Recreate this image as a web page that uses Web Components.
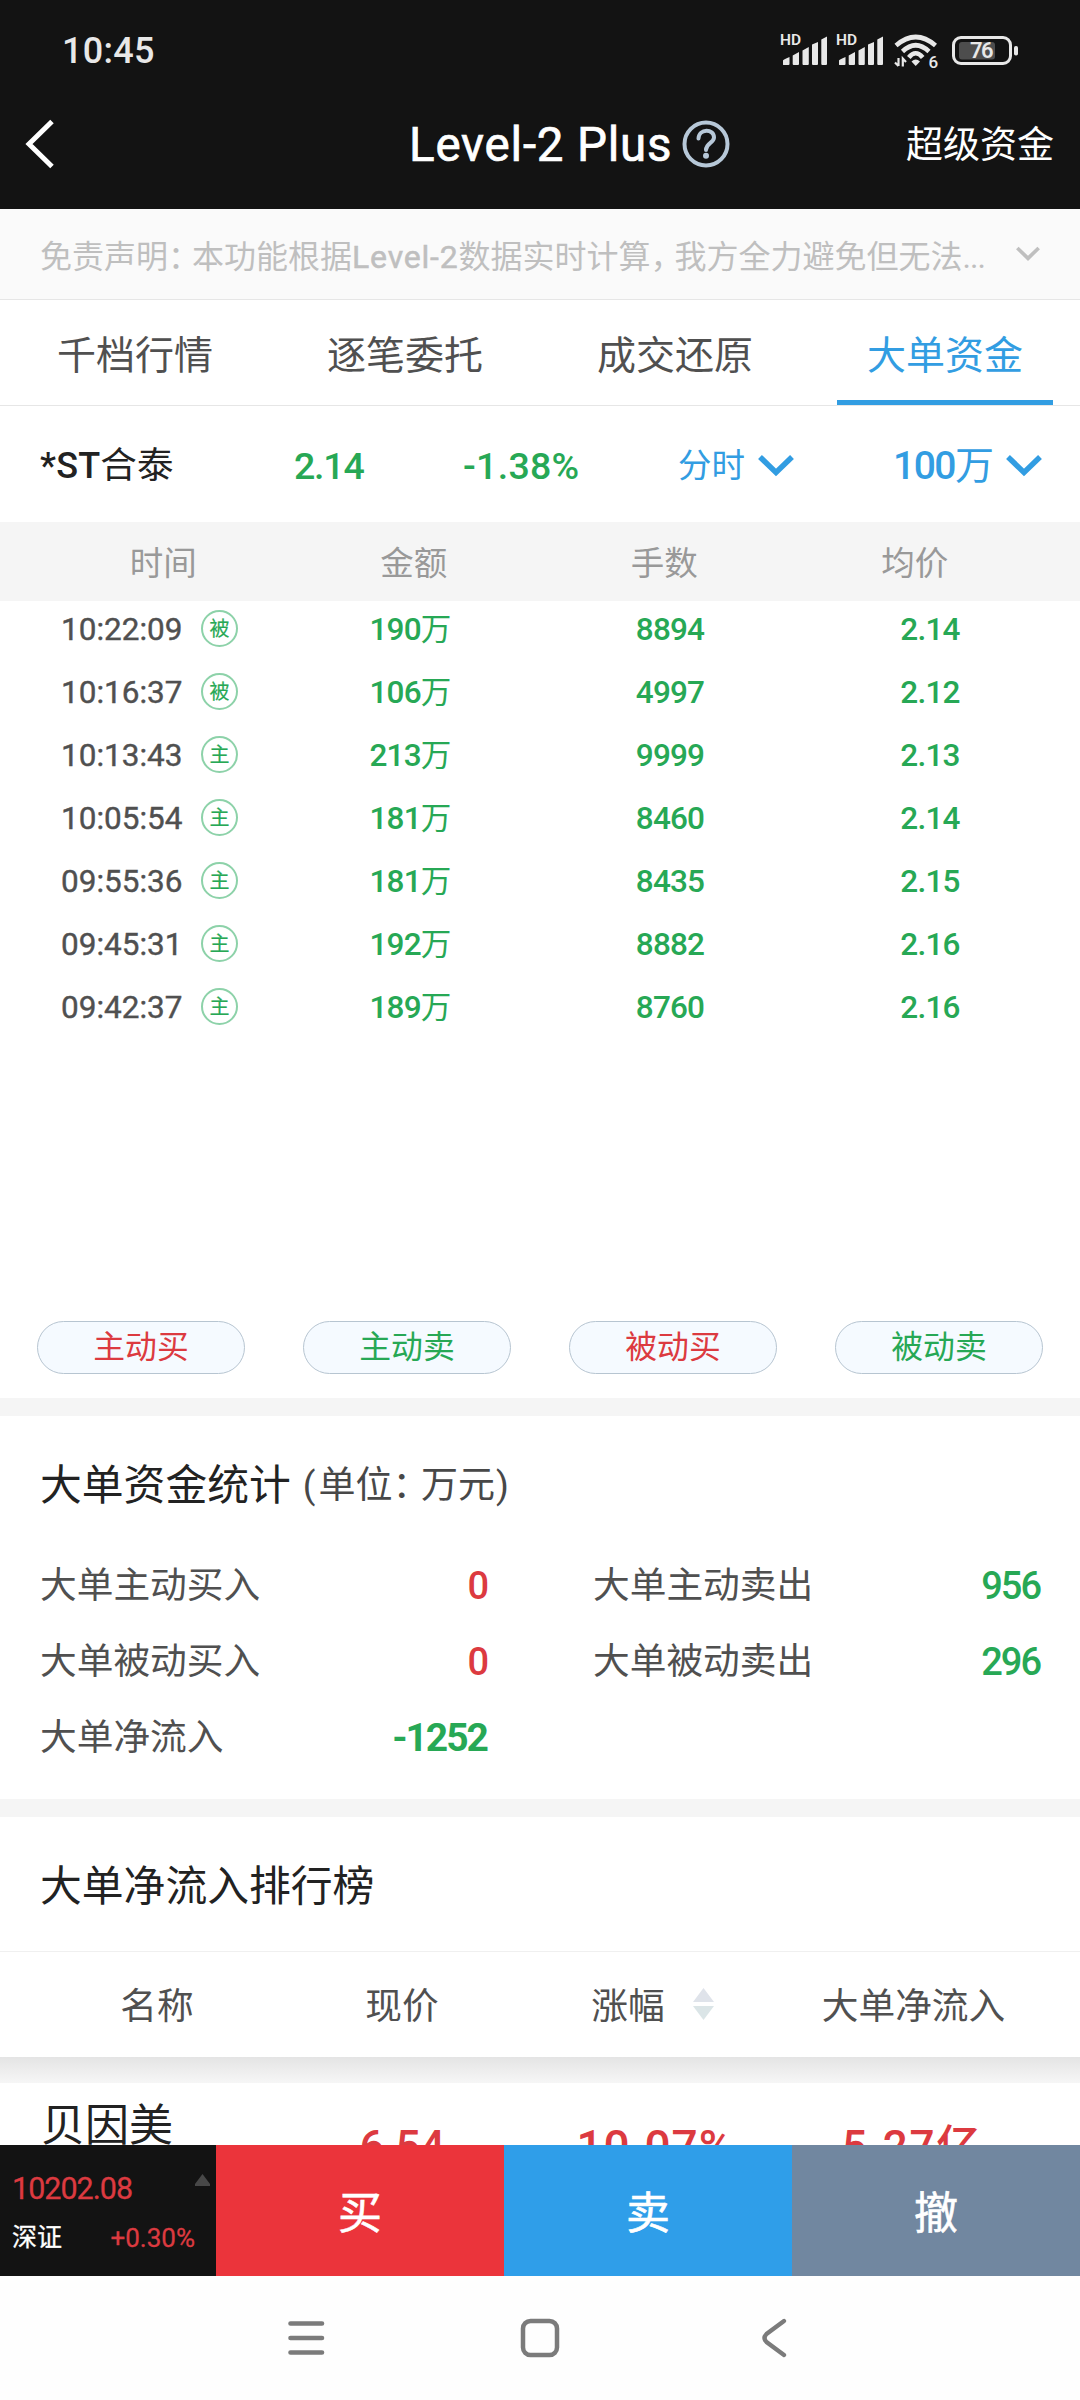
<!DOCTYPE html>
<html lang="zh-CN">
<head>
<meta charset="utf-8">
<title>Level-2 Plus</title>
<style>
  html, body { margin: 0; padding: 0; background: #fff; }
</style>
</head>
<body>
<l2-app></l2-app>
<script>
const RED = '#dc3a40'
const GREEN = '#27a855'
const BLUE = '#329de2'

// attach an open shadow root and fill it
function shadow(el, css, html) {
  el.attachShadow({ mode: 'open' }).innerHTML = `<style>*{box-sizing:border-box}${css}</style>${html}`
}

customElements.define('status-bar', class extends HTMLElement {
  constructor() {
    super()
    let signal = `<div class="sig"><span>HD</span><svg width="46" height="29" viewBox="0 0 46 29" fill="#e8e8e8">
      <path d="M2 28.5V24.5Q2 23.5 8.5 21V28Q8.5 29 7.5 29H3Q2 29 2 28.5ZM11.7 19.5L18 16V28Q18 29 17 29H12.7Q11.7 29 11.7 28ZM21.5 14.5L27.8 11V28Q27.8 29 26.8 29H22.5Q21.5 29 21.5 28ZM31 8.5L37 6V28Q37 29 36 29H32Q31 29 31 28ZM40.3 3.5L46 .5V28Q46 29 45 29H41.3Q40.3 29 40.3 28Z"/></svg></div>`
    shadow(this, `
    :host{display:flex;align-items:center;height:80px;color:#e8e8e8;padding:0 61px 0 62px}
    .time{font:500 36px/40px Roboto,sans-serif;letter-spacing:.3px;padding-top:21px;flex:1}
    .sig{display:flex;position:relative;width:56px;height:29px;margin-top:20px}
    .sig span{position:absolute;left:-1px;top:-3px;font:600 15.5px/15px Roboto,sans-serif}
    .wifi{margin:22px 11px 0 1px}
    .batt{position:relative;width:67px;height:29px;margin-top:20px}
    .batt svg{display:block}
    .batt span{position:absolute;left:18px;top:4px;font:600 22px/22px Roboto,sans-serif;letter-spacing:-1.5px}
    .six{font:500 17px Roboto,sans-serif;fill:#e8e8e8}
    `, `<div class="time">10:45</div>${signal}${signal}
    <svg class="wifi" width="47" height="39" viewBox="0 -2 47 39" fill="none" stroke="#e8e8e8" stroke-width="4.6">
      <path d="M2 11.500Q21.700-5.500 41.500 11.500M8.500 17.500Q21.700 5 35 17.500M14.800 23.500Q21.700 15 28.700 23.500"/>
      <path d="M17.500 27.500Q21.700 23.500 26 27.500L21.700 32Z" fill="#e8e8e8" stroke="none"/>
      <path d="M4.500 24V32M1 28.500L4.500 32M8.800 32.500V24.500L12 28" stroke-width="2.2"/>
      <text class="six" x="34.5" y="33.500" stroke="none">6</text>
    </svg>
    <div class="batt"><svg width="67" height="29" viewBox="0 0 67 29">
      <rect x="1.5" y="1.5" width="57" height="26" rx="7.5" fill="none" stroke="#e8e8e8" stroke-width="3"/>
      <rect x="7" y="6" width="36" height="17.5" rx="3" fill="#4d4d4d"/>
      <rect x="62" y="10" width="4" height="9.5" rx="1.8" fill="#e8e8e8"/>
    </svg><span>76</span></div>`)
  }
})

customElements.define('title-bar', class extends HTMLElement {
  constructor() {
    super()
    shadow(this, `
    :host{display:grid;grid-template-columns:385px auto 1fr;align-items:center;height:129px;color:#fff;padding:0 26px 0 24px}
    h1{display:flex;align-items:center;gap:10px;margin:0;font-size:47.5px;line-height:56px;font-weight:400;letter-spacing:.8px;-webkit-text-stroke:.7px #fff}
    .right{text-align:right;font-size:37px;line-height:44px;padding-top:2px}
    svg{display:block}
    h1 svg{margin-top:-2px}
    `, `<svg width="32" height="52" viewBox="0 0 32 52" fill="none" stroke="#fff" stroke-width="5"><path d="M28 2.5L5 25L28 47.5"/></svg>
    <h1><slot></slot><svg width="48" height="48" viewBox="0 0 48 48" fill="none" stroke="#b7c8d8" stroke-width="4">
      <circle cx="24" cy="24" r="21.5"/><path d="M16.500 18.500C17 8 32 8.500 32 17.500C32 23 24 23 24 30" stroke-linecap="round"/><circle cx="24" cy="35.7" r="3" fill="#b7c8d8" stroke="none"/></svg></h1>
    <div class="right"><slot name="right"></slot></div>`)
  }
})

customElements.define('drop-arrow', class extends HTMLElement {
  constructor() {
    super()
    shadow(this, `:host{display:block;width:38px;height:24px}svg{display:block;width:100%;height:100%}`,
      `<svg viewBox="0 0 38 24" fill="none" stroke="currentColor" stroke-width="5.5"><path d="M3 3L19 18.500L35 3"/></svg>`)
  }
})

customElements.define('notice-line', class extends HTMLElement {
  constructor() {
    super()
    shadow(this, `
    :host{display:flex;align-items:center;height:91px;background:#fafafa;border-bottom:1px solid #e6e6e6;color:#bfbfbf;padding:0 39px 0 40px;font-size:32px}
    div{flex:1;white-space:nowrap}
    i{font-style:normal;font-feature-settings:"halt";margin-right:8px}
    b{font-weight:400;letter-spacing:.8px;-webkit-text-stroke:.5px #bfbfbf}
    drop-arrow{width:26px;height:16px}
    `, `<div>免责声明<i>：</i>本功能根据<b>Level-2</b>数据实时计算<i>，</i>我方全力避免但无法<span style="letter-spacing:-1px">...</span></div><drop-arrow></drop-arrow>`)
  }
})

customElements.define('tab-strip', class extends HTMLElement {
  constructor() {
    super()
    let tabs = ['千档行情', '逐笔委托', '成交还原', '大单资金']
    shadow(this, `
    :host{display:grid;grid-template-columns:repeat(4,1fr);height:106px;border-bottom:1px solid #e6e6e6;color:#505050;font-size:39px}
    div{display:grid;grid-template-rows:100px 5px;justify-items:center;align-items:center}
    span{padding-top:3px}
    .on{color:${BLUE}}
    .on::after{content:'';width:216px;height:5px;background:${BLUE}}
    `, tabs.map((t, i) => `<div class="${i == 3 ? 'on' : ''}"><span>${t}</span></div>`).join(''))
  }
})

customElements.define('quote-line', class extends HTMLElement {
  constructor() {
    super()
    shadow(this, `
    :host{display:grid;grid-template-columns:254px 168px 216px 215px 1fr;align-items:center;height:116px;padding:3px 39px 0 40px;font-size:37.5px;font-weight:500;color:${GREEN};line-height:50px}
    .name{color:#222;font-size:36px;letter-spacing:.2px}
    .name em,.pick em{font-style:normal;font-weight:400}
    .name em{font-size:36.5px}
    .pick{display:flex;align-items:center;color:${BLUE};white-space:nowrap}
    .pick drop-arrow{margin:0 0 0 12px}
    .num{letter-spacing:-1.2px}
    .pct{letter-spacing:.3px;padding-left:1px}
    .p2{font-size:39px;letter-spacing:-1.5px}
    .p1{font-size:33.5px}
    `, `<div class="name">*ST<em>合泰</em></div><div class="num">2.14</div><div class="pct">-1.38%</div>
    <div class="pick p1"><em>分时</em><drop-arrow></drop-arrow></div>
    <div class="pick p2">100<em>万</em><drop-arrow></drop-arrow></div>`)
  }
})

customElements.define('deal-table', class extends HTMLElement {
  constructor() {
    super()
    let rows = [
      ['10:22:09', '被', '190', '8894', '2.14'],
      ['10:16:37', '被', '106', '4997', '2.12'],
      ['10:13:43', '主', '213', '9999', '2.13'],
      ['10:05:54', '主', '181', '8460', '2.14'],
      ['09:55:36', '主', '181', '8435', '2.15'],
      ['09:45:31', '主', '192', '8882', '2.16'],
      ['09:42:37', '主', '189', '8760', '2.16'],
    ]
    shadow(this, `
    :host{display:block;height:799px}
    .head{display:grid;grid-template-columns:repeat(4,250.5px);padding:0 0 3px 38px;height:79px;align-items:center;text-align:center;background:#f5f5f5;color:#999;font-size:33.5px}
    .row{display:grid;grid-template-columns:217px 260px 260px 260px;padding-left:63px;height:63px;align-items:center;text-align:center;color:${GREEN};font-size:31.5px;font-weight:500;line-height:40px;letter-spacing:-.8px}
    .body{margin-top:-3px}
    .t{display:flex;align-items:center;color:#505050;font-weight:400;letter-spacing:0;-webkit-text-stroke:.4px #505050}
    .t span{width:140px;margin-left:-2px;text-align:left}
    .t i{width:37px;height:37px;border:2px solid #8dd2a9;border-radius:50%;font:400 20px/31px "Noto Sans CJK SC",sans-serif;color:${GREEN};text-align:center;-webkit-text-stroke:.2px ${GREEN};margin-top:-2px}
    em{font-style:normal;font-weight:400;font-size:30.5px}
    `, `<div class="head"><div>时间</div><div>金额</div><div>手数</div><div>均价</div></div>
    <div class="body">` + rows.map(r => `<div class="row"><div class="t"><span>${r[0]}</span><i>${r[1]}</i></div>
      <div>${r[2]}<em>万</em></div><div>${r[3]}</div><div>${r[4]}</div></div>`).join('') + '</div>')
  }
})

customElements.define('filter-pills', class extends HTMLElement {
  constructor() {
    super()
    let pills = [['主动买', RED], ['主动卖', GREEN], ['被动买', RED], ['被动卖', GREEN]]
    shadow(this, `
    :host{display:flex;gap:58px;height:77px;padding:0 37px;font-size:31.8px}
    div{flex:1;height:53px;line-height:51px;text-align:center;border:1px solid #b7c5d1;border-radius:27px;background:#f5faff}
    `, pills.map(p => `<div style="color:${p[1]}">${p[0]}</div>`).join(''))
  }
})

customElements.define('fund-stats', class extends HTMLElement {
  constructor() {
    super()
    shadow(this, `
    :host{display:block;height:401px;border-top:18px solid #f5f5f5;color:#505050}
    h2{margin:0;padding:42px 0 0 40px;height:132px;font-size:41.8px;line-height:56px;font-weight:400;color:#222;display:flex}
    h2 small{font-size:37px;color:#484848;margin-left:12px}
    h2 i{font-style:normal;font-feature-settings:"halt";margin-right:10px}
    .o{margin-right:3px}
    .c{margin-left:1px}
    .grid{display:grid;grid-template-columns:447px 447px;column-gap:106px;grid-auto-rows:76px;padding-left:40px}
    .grid div{display:flex;justify-content:space-between;align-items:center;font-size:36.7px;line-height:50px}
    b{font-size:38px;font-weight:500;letter-spacing:-2px}
    .r{color:${RED}} .g{color:${GREEN}}
    .s{font-weight:700;font-size:39px;letter-spacing:-2px}
    `, `<h2>大单资金统计<small><span class="o">(</span>单位<i>：</i>万元<span class="c">)</span></small></h2>
    <div class="grid">
      <div>大单主动买入<b class="r">0</b></div><div>大单主动卖出<b class="g">956</b></div>
      <div>大单被动买入<b class="r">0</b></div><div>大单被动卖出<b class="g">296</b></div>
      <div>大单净流入<b class="g s">-1252</b></div>
    </div>`)
  }
})

customElements.define('rank-list', class extends HTMLElement {
  constructor() {
    super()
    shadow(this, `
    :host{display:block;height:346px;border-top:18px solid #f5f5f5;overflow:hidden}
    h2{margin:0;height:134px;padding:0 0 0 40px;line-height:139px;font-size:41.8px;font-weight:400;color:#222}
    .head,.row{display:grid;grid-template-columns:314px 176px 258px 332px;justify-items:center}
    .head{height:106px;border-top:1px solid #f0f0f0;align-items:center;font-size:36.7px;color:#505050;padding-bottom:3px}
    .sort{display:flex;align-items:center;gap:28px;padding-left:67px}
    .sort svg{margin-top:2px}
    .head div:last-child{margin-right:1px}
    .shade{height:26px;background:linear-gradient(#e4e4e4,#f6f6f6)}
    .row{height:62px;color:${RED};font-size:44px;font-weight:500;line-height:60px}
    .row div{padding-top:34px;letter-spacing:-.5px}
    .row .name{justify-self:start;padding:13px 0 0 41px;color:#222;font-size:44px;font-weight:400;letter-spacing:0}
    .row .pct{padding-left:72px;font-size:46px;letter-spacing:1px}
    .row .amt{letter-spacing:1.8px;padding-right:4px}
    `, `<h2>大单净流入排行榜</h2>
    <div class="head"><div>名称</div><div>现价</div><div class="sort">涨幅<svg width="21" height="34" viewBox="0 0 21 34"><path d="M0 15L10.500 1L21 15Z" fill="#dfe3ea"/><path d="M0 19L21 19L10.500 33Z" fill="#dbe5e7"/></svg></div><div>大单净流入</div></div>
    <div class="shade"></div>
    <div class="row"><div class="name">贝因美</div><div>6.54</div><div class="pct">10.07%</div><div class="amt">5.27亿</div></div>`)
  }
})

customElements.define('trade-bar', class extends HTMLElement {
  constructor() {
    super()
    shadow(this, `
    :host{display:grid;grid-template-columns:216px repeat(3,288px);height:131px;color:#fff}
    .act{display:flex;align-items:center;justify-content:center;font-size:44px;padding-bottom:2px;font-weight:400;-webkit-text-stroke:.6px #fff}
    .idx{background:#131313;padding:26px 0 0 12px;color:${RED}}
    .top{display:flex;justify-content:space-between;font-size:30.5px;line-height:36px;letter-spacing:-1px;padding-right:6px;-webkit-text-stroke:.3px}
    .bot{display:flex;align-items:center;justify-content:space-between;font-size:26px;line-height:34px;margin-top:14px;padding-right:21px;-webkit-text-stroke:.3px}
    .bot span{color:#fff;font-size:25px;font-weight:400}
    svg{margin-top:3px}
    `, `<div class="idx"><div class="top">10202.08<svg width="15" height="12" viewBox="0 0 15 12"><path d="M7.500 0L15 10V12H0V10Z" fill="#484848"/></svg></div>
    <div class="bot"><span>深证</span>+0.30%</div></div>
    <div class="act" style="background:#eb343b">买</div><div class="act" style="background:#2f9ee9">卖</div><div class="act" style="background:#7187a0">撤</div>`)
  }
})

customElements.define('nav-keys', class extends HTMLElement {
  constructor() {
    super()
    shadow(this, `
    :host{display:flex;justify-content:center;align-items:center;gap:194px;height:124px;background:#fefefe}
    svg{display:block}
    `, `<svg width="40" height="40" viewBox="0 0 40 40" fill="none" stroke="#7b7b7b" stroke-width="4.6" stroke-linecap="round"><path d="M4.500 5.500H36M4.500 20H36M4.500 34.500H36"/></svg>
    <svg width="40" height="40" viewBox="0 0 40 40" fill="none" stroke="#7b7b7b" stroke-width="4.5"><rect x="3" y="3" width="34" height="34" rx="7.5"/></svg>
    <svg width="40" height="40" viewBox="0 0 40 40" fill="none" stroke="#7b7b7b" stroke-width="4.3" stroke-linecap="round"><path d="M30 3L12.500 16Q8.500 20 12.500 24L30 37"/></svg>`)
  }
})

customElements.define('l2-app', class extends HTMLElement {
  constructor() {
    super()
    shadow(this, `
    :host{display:block;width:1080px;height:2400px;overflow:hidden;background:#fff;font-family:Roboto,"Noto Sans CJK SC",sans-serif}
    header{background:#131313}
    `, `<header><status-bar></status-bar>
      <title-bar>Level-2 Plus<span slot="right">超级资金</span></title-bar></header>
    <notice-line></notice-line>
    <tab-strip></tab-strip>
    <quote-line></quote-line>
    <deal-table></deal-table>
    <filter-pills></filter-pills>
    <fund-stats></fund-stats>
    <rank-list></rank-list>
    <trade-bar></trade-bar>
    <nav-keys></nav-keys>`)
  }
})
</script>
</body>
</html>
